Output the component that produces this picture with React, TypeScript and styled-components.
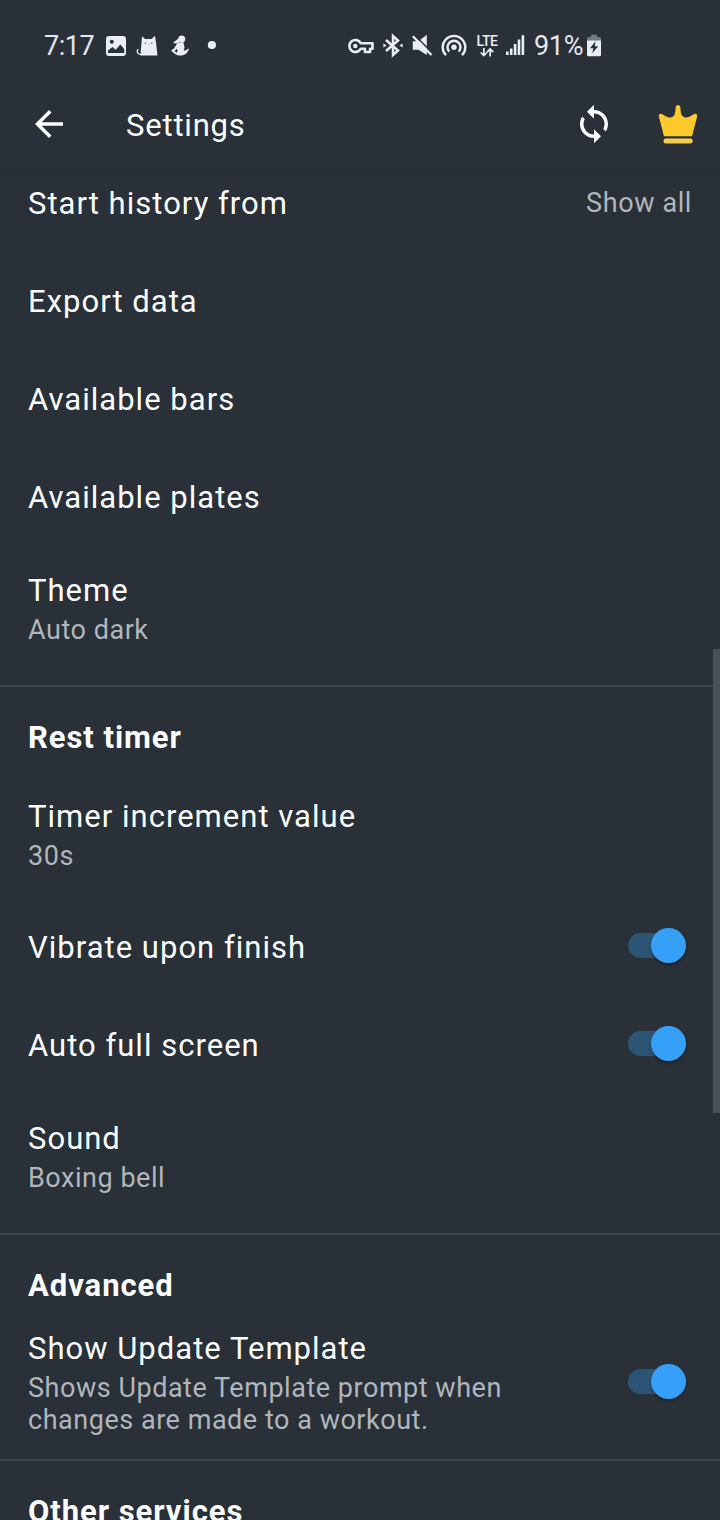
import React from "react";
import styled, { createGlobalStyle } from "styled-components";

const GlobalStyle = createGlobalStyle`
  * { box-sizing: border-box; }
  body { margin: 0; background: #293037; }
`;

const Screen = styled.div`
  position: relative;
  display: flex;
  flex-direction: column;
  width: 720px;
  height: 1520px;
  overflow: hidden;
  background: #293037;
  color: #fafcfd;
  font-family: Roboto, "Liberation Sans", sans-serif;
`;

const StatusBar = styled.div`
  display: flex;
  flex: none;
  height: 76px;
  padding: 14px 119px 0 44px;
  align-items: center;
  justify-content: space-between;
`;

const StatusGroup = styled.div`
  display: flex;
  align-items: center;
`;

const StatusText = styled.span<{ $gap?: number; $spacing?: number }>`
  width: 50px;
  margin-top: 2px;
  margin-left: ${(p) => p.$gap ?? 0}px;
  font-size: 27px;
  line-height: 32px;
  letter-spacing: ${(p) => p.$spacing ?? 0}px;
  white-space: nowrap;
  color: #e3e7ee;
`;

const StatusIcon = styled.svg<{ $gap: number }>`
  display: block;
  flex: none;
  height: 24px;
  margin-left: ${(p) => p.$gap}px;
  overflow: visible;
  color: #eaeef4;
`;

const AppBar = styled.header`
  display: flex;
  flex: none;
  height: 96px;
  padding: 0 21px 0 28px;
  align-items: center;
  z-index: 1;
  background: #293037;
  box-shadow: 0 1px 3px rgba(0, 0, 0, 0.16);
`;

const Title = styled.h1`
  flex: 1;
  margin: 4px 0 0 56px;
  font-size: 31px;
  line-height: 38px;
  font-weight: 400;
  letter-spacing: 0.8px;
`;

const BarIcon = styled.svg<{ $gap?: number }>`
  display: block;
  flex: none;
  margin-left: ${(p) => p.$gap ?? 0}px;
`;

const ScrollArea = styled.main`
  flex: 1;
  min-height: 0;
  overflow: hidden;
`;

const List = styled.div`
  margin-top: -18px;
`;

const Section = styled.section`
  padding-bottom: 13px;
  border-bottom: 2px solid #3c444b;
  &:last-child { border-bottom: 0; }
`;

const SectionTitle = styled.h2`
  height: 85px;
  margin: 0;
  padding: 32px 28px 0;
  font-size: 31px;
  line-height: 38px;
  font-weight: 700;
  letter-spacing: 0.95px;
`;

const Row = styled.div<{ $tall?: boolean }>`
  display: flex;
  height: ${(p) => (p.$tall ? 126 : 98)}px;
  padding: ${(p) => (p.$tall ? 0 : 2)}px 28px 0;
  align-items: center;
  justify-content: space-between;
`;

const Label = styled.div`
  font-size: 31px;
  line-height: 38px;
  letter-spacing: 1.02px;
  white-space: nowrap;
`;

const Detail = styled.div`
  max-width: 520px;
  margin: 4px 0 1px;
  font-size: 27px;
  line-height: 32px;
  letter-spacing: 0.53px;
  color: #b0b6bd;
`;

const Value = styled.div`
  margin-bottom: 2px;
  font-size: 27px;
  line-height: 32px;
  letter-spacing: 0.6px;
  color: #b0b6bd;
`;

const Track = styled.div<{ $lift: number }>`
  display: flex;
  flex: none;
  width: 58px;
  height: 25px;
  margin: 0 6px ${(p) => p.$lift}px 0;
  border-radius: 13px;
  align-items: center;
  justify-content: flex-end;
  background: #2c5475;
`;

const Thumb = styled.div`
  flex: none;
  width: 35px;
  height: 35px;
  border-radius: 50%;
  background: #36a0f9;
  box-shadow: 0 2px 3px rgba(0, 0, 0, 0.3);
`;

const ScrollThumb = styled.div`
  position: absolute;
  top: 649px;
  right: 0;
  width: 7px;
  height: 464px;
  background: #4a5056;
`;

const Switch = ({ lift }: { lift: number }) => (
  <Track $lift={lift}>
    <Thumb />
  </Track>
);

type ItemProps = { label: string; detail?: React.ReactNode; value?: string; on?: boolean };

const Item = ({ label, detail, value, on }: ItemProps) => (
  <Row $tall={!!detail}>
    <div>
      <Label>{label}</Label>
      {detail && <Detail>{detail}</Detail>}
    </div>
    {value && <Value>{value}</Value>}
    {on && <Switch lift={detail ? 3 : 5} />}
  </Row>
);

const dark = "#293037";

const PictureIcon = () => (
  <StatusIcon $gap={12} width="20" viewBox="0 0 20 24">
    <rect y="3" width="20" height="20" rx="3" fill="currentColor" />
    <circle cx="5.8" cy="8.8" r="2" fill={dark} />
    <path d="M2 20v-2.500L6.500 14l3.200 2.800 4.600-5.300 3.900 4.500v4z" fill={dark} />
  </StatusIcon>
);

const CatIcon = () => (
  <StatusIcon $gap={10} width="22" viewBox="0 0 22 24">
    <path d="M4.500 22.500 5.600 8 6 3.200 9.200 6h6.300L19 2.800l.8 5 1.700 14.700z" fill="currentColor" />
    <path d="M5.500 21.600C2 21.600.6 19 1.500 17L2.600 16.500" fill="none" stroke="currentColor" strokeWidth="1.300" />
    <circle cx="9.200" cy="10.200" r=".6" fill={dark} />
    <circle cx="15.800" cy="10.200" r=".6" fill={dark} />
    <circle cx="12.500" cy="11.500" r=".35" fill={dark} />
  </StatusIcon>
);

const FigureIcon = () => (
  <StatusIcon $gap={13} width="18" viewBox="0 0 18 24">
    <circle cx="10.700" cy="5.900" r="3.500" fill="currentColor" />
    <path d="M9 5C5.500 6 4.600 8.400 2 9.700c2 1 5 .4 7-.8z" fill="currentColor" />
    <path
      d="M6.500 10 12.300 9l1.200 5.200-.7 3.200 2-.2 3.200-2c-.6 4.400-4 7.300-8.800 7.300-4.200 0-6-2.200-9.200-5l3-2 3-5z"
      fill="currentColor"
    />
    <path d="M3.600 18 5.700 15.800l1 2.200-1.200 1.700z" fill={dark} />
  </StatusIcon>
);

const DotIcon = () => (
  <StatusIcon $gap={18} width="9" viewBox="0 0 9 24">
    <circle cx="4.900" cy="12" r="4.100" fill="currentColor" />
  </StatusIcon>
);

const KeyIcon = () => (
  <StatusIcon $gap={0} width="26" viewBox="0 0 26 24" fill="none" stroke="currentColor">
    <path
      d="M12.700 10.200A6 6 0 1 0 12.700 15.800h4.200v3.200h5.200v-3.200h2.400v-5.600z"
      strokeWidth="2.600"
      strokeLinejoin="round"
    />
    <circle cx="7.300" cy="13" r="2.200" fill="currentColor" stroke="none" />
  </StatusIcon>
);

const BluetoothIcon = () => (
  <StatusIcon $gap={9} width="20" viewBox="0 0 20 24" fill="none" stroke="currentColor" strokeWidth="2.500">
    <path d="M3 7 15 17.500 10 22V3l5 4.500L3 18" />
    <path d="M.4 10.500 3.600 12.500.4 14.500zM19.600 10.500l-3.200 2 3.200 2z" fill="currentColor" stroke="none" />
  </StatusIcon>
);

const MuteIcon = () => (
  <StatusIcon $gap={9} width="21" viewBox="0 0 21 24">
    <path d="M.8 8.300H6.500L14.800 1.800v20.200L6.500 16.800H.8z" fill="currentColor" />
    <path d="M3 2.500 21 20.500" stroke={dark} strokeWidth="1.500" />
    <path d="M.8 3.200 19.500 22" stroke="currentColor" strokeWidth="2.300" />
  </StatusIcon>
);

const HotspotIcon = () => (
  <StatusIcon $gap={8} width="26" viewBox="0 0 26 24" fill="none" stroke="currentColor" strokeWidth="2.400">
    <path d="M5 22.200a11.300 11.300 0 1 1 16 0" />
    <path d="M8.300 18.700a6.500 6.500 0 1 1 9.400 0" />
    <circle cx="13" cy="14.300" r="2.700" fill="currentColor" stroke="none" />
  </StatusIcon>
);

const LteText = styled.div`
  display: flex;
  flex-direction: column;
  width: 22px;
  height: 24px;
  margin-left: 9px;
  align-items: center;
  font-size: 14px;
  line-height: 14px;
  font-weight: 500;
  letter-spacing: -0.5px;
  color: #eaeef4;
`;

const LteLabel = styled.span`
  padding-top: 1px;
`;

const LteIcon = () => (
  <LteText>
    <LteLabel>LTE</LteLabel>
    <svg width="16" height="10" viewBox="0 0 16 10" fill="none" stroke="currentColor" strokeWidth="1.900">
      <path d="M4.500 0v8.500M1 5l3.500 3.500L8 5M11.500 9.500V1M8 4.500 11.500 1 15 4.500" />
    </svg>
  </LteText>
);

const SignalIcon = () => (
  <StatusIcon $gap={8} width="18" viewBox="0 0 18 24" fill="currentColor">
    <path d="M0 18.500h2.600V22H0zM3.900 15.500h2.600V22H3.900zM7.800 11h2.600v11H7.800zM11.700 6.500h2.600V22h-2.600zM15.600 2.200h2.600V22h-2.600z" />
  </StatusIcon>
);

const BatteryIcon = () => (
  <StatusIcon $gap={3} width="14" viewBox="0 0 14 24">
    <path d="M0 8V5.500a1.500 1.500 0 0 1 1.500-1.500H4V1.800h6V4h2.500A1.500 1.500 0 0 1 14 5.500V8z" fill="#737980" />
    <path d="M0 7.500h14v14.200a1.500 1.500 0 0 1-1.500 1.500h-11A1.500 1.500 0 0 1 0 21.700z" fill="currentColor" />
    <path d="M8.500 8.300 3 15.300h3.300l-1 5 5.900-7H7.800z" fill={dark} />
  </StatusIcon>
);

export default function App() {
  return (
    <>
      <GlobalStyle />
      <Screen>
        <StatusBar>
          <StatusGroup>
            <StatusText $spacing={-0.5}>7:17</StatusText>
            <PictureIcon />
            <CatIcon />
            <FigureIcon />
            <DotIcon />
          </StatusGroup>
          <StatusGroup>
            <KeyIcon />
            <BluetoothIcon />
            <MuteIcon />
            <HotspotIcon />
            <LteIcon />
            <SignalIcon />
            <StatusText $gap={10} $spacing={-0.3}>91%</StatusText>
            <BatteryIcon />
          </StatusGroup>
        </StatusBar>
        <AppBar>
          <BarIcon width="42" height="42" viewBox="0 0 24 24" fill="currentColor">
            <path d="M20 11H7.830l5.590-5.590L12 4l-8 8 8 8 1.410-1.410L7.830 13H20v-2z" />
          </BarIcon>
          <Title>Settings</Title>
          <BarIcon width="42" height="42" viewBox="0 0 24 24" fill="currentColor">
            <path d="M12 4V1L8 5l4 4V6c3.310 0 6 2.690 6 6 0 1.010-.25 1.970-.7 2.800l1.460 1.460C19.540 15.030 20 13.570 20 12c0-4.420-3.580-8-8-8zm0 14c-3.310 0-6-2.690-6-6 0-1.010.25-1.970.7-2.800L5.240 7.740C4.460 8.970 4 10.430 4 12c0 4.420 3.580 8 8 8v3l4-4-4-4v3z" />
          </BarIcon>
          <BarIcon $gap={42} width="42" height="42" viewBox="0 0 42 42" fill="#fdca2c">
            <path d="M7 33.200 1.900 13.800C1.200 11.200 3.600 10.100 5.300 11.300c4.500 3.100 8.500 4.600 11.600 1.400 1-1.200 1.400-3.700 1.700-8.200.2-3.400 4.600-3.400 4.800 0 .3 4.500.7 7 1.700 8.200 3.100 3.200 7.100 1.700 11.600-1.400 1.700-1.200 4.100-.1 3.400 2.500L35 33.200z" />
            <rect x="6.600" y="35.400" width="29" height="5" rx="2.200" fill="#f3ce52" />
          </BarIcon>
        </AppBar>
        <ScrollArea>
          <List>
            <Section>
              <Item label="Start history from" value="Show all" />
              <Item label="Export data" />
              <Item label="Available bars" />
              <Item label="Available plates" />
              <Item label="Theme" detail="Auto dark" />
            </Section>
            <Section>
              <SectionTitle>Rest timer</SectionTitle>
              <Item label="Timer increment value" detail="30s" />
              <Item label="Vibrate upon finish" on />
              <Item label="Auto full screen" on />
              <Item label="Sound" detail="Boxing bell" />
            </Section>
            <Section>
              <SectionTitle>Advanced</SectionTitle>
              <Item
                label="Show Update Template"
                detail={<>Shows Update Template prompt when<br />changes are made to a workout.</>}
                on
              />
            </Section>
            <Section>
              <SectionTitle>Other services</SectionTitle>
            </Section>
          </List>
        </ScrollArea>
        <ScrollThumb />
      </Screen>
    </>
  );
}
